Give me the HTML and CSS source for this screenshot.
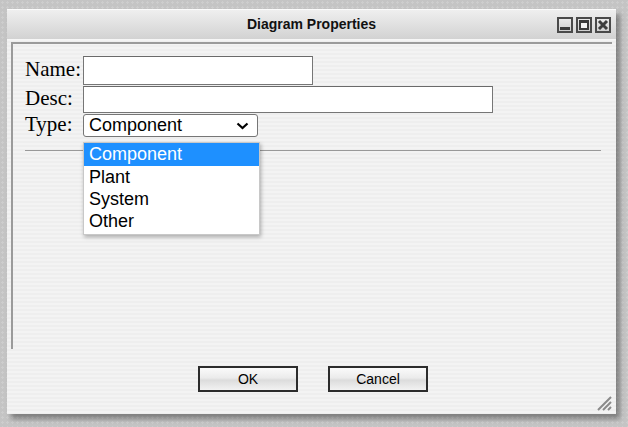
FILE: index.html
```html
<!DOCTYPE html>
<html>
<head>
<meta charset="utf-8">
<link rel="stylesheet" href="styles.css">
</head>
<body>
<div class="window">
  <div class="titlebar">
    <span></span>
    <span class="title">Diagram Properties</span>
    <div class="controls">
      <span class="ctl"><svg width="12" height="12" viewBox="0 0 12 12"><rect x="1" y="8" width="10" height="3" fill="#3c3c3c"/></svg></span>
      <span class="ctl"><svg width="12" height="12" viewBox="0 0 12 12"><rect x="2" y="2" width="8" height="8" fill="#f4f4f4" stroke="#3c3c3c" stroke-width="2"/><rect x="1" y="1" width="10" height="3" fill="#3c3c3c"/></svg></span>
      <span class="ctl"><svg width="12" height="12" viewBox="0 0 12 12"><path d="M2 2 L10 10 M10 2 L2 10" stroke="#3c3c3c" stroke-width="3"/></svg></span>
    </div>
  </div>
  <div class="panel">
    <div class="form">
      <label class="lbl">Name:</label>
      <input class="field name" type="text">
      <label class="lbl">Desc:</label>
      <input class="field desc" type="text">
      <label class="lbl">Type:</label>
      <div class="selwrap">
        <div class="select">
          <span>Component</span>
          <svg width="13" height="8" viewBox="0 0 13 8"><polyline points="1.5,1.5 6.5,6 11.5,1.5" fill="none" stroke="#000" stroke-width="2.2"/></svg>
        </div>
        <div class="dropdown">
          <div class="opt sel">Component</div>
          <div class="opt">Plant</div>
          <div class="opt">System</div>
          <div class="opt">Other</div>
        </div>
      </div>
    </div>
    <div class="rule"></div>
  </div>
  <div class="footer">
    <button class="btn">OK</button>
    <button class="btn">Cancel</button>
  </div>
  <svg class="grip" width="15" height="15" viewBox="0 0 15 15">
    <path d="M1 14 L14 1 M6 14 L14 6 M11 14 L14 11" stroke="#8a8a8a" stroke-width="2"/>
  </svg>
</div>
</body>
</html>
```
FILE: styles.css
```css
html, body {
  margin: 0;
  padding: 0;
}
body {
  width: 628px;
  height: 427px;
  overflow: hidden;
  background-color: #c4c4c4;
  background-image: radial-gradient(circle, #cdcdcd 1px, transparent 1.2px);
  background-size: 5px 5px;
  font-family: "Liberation Sans", Arial, sans-serif;
}
.window {
  position: relative;
  margin: 9px 0 0 7px;
  width: 609px;
  height: 405px;
  box-sizing: border-box;
  background: repeating-linear-gradient(to bottom, #eeeeee 0, #eeeeee 2px, #f3f3f3 2px, #f3f3f3 4px);
  box-shadow: 4px 5px 5px rgba(0, 0, 0, 0.35);
  display: flex;
  flex-direction: column;
}
.titlebar {
  height: 31px;
  box-sizing: border-box;
  border-top: 1px solid #fbfbfb;
  border-bottom: 1px solid #f6f6f6;
  background: linear-gradient(to bottom, #efefef, #d2d2d2);
  display: grid;
  grid-template-columns: 1fr auto 1fr;
  align-items: center;
  padding: 0 5px 0 5px;
}
.title {
  font-weight: bold;
  font-size: 14px;
  color: #111;
  margin-top: -2px;
}
.controls {
  justify-self: end;
  display: flex;
  gap: 3px;
  margin-top: 1px;
}
.ctl {
  width: 16px;
  height: 16px;
  box-sizing: border-box;
  border: 2px solid #4a4a4a;
  background: linear-gradient(to bottom, #eaeaea, #cfcfcf);
  display: flex;
  align-items: center;
  justify-content: center;
}
.ctl svg {
  display: block;
}
.panel {
  margin: 2px 4px 0 4px;
  height: 307px;
  box-sizing: border-box;
  border-top: 2px solid #9a9a9a;
  border-left: 2px solid #9a9a9a;
  padding: 12px 11px 0 12px;
}
.form {
  display: grid;
  grid-template-columns: 58px max-content;
  row-gap: 1px;
  align-items: center;
}
.lbl {
  font-family: "Liberation Serif", "Times New Roman", serif;
  font-size: 21px;
  color: #000;
  line-height: 23px;
  margin-top: -2px;
}
.field {
  box-sizing: border-box;
  margin: 0;
  border: 1px solid #767676;
  border-top-color: #6a6a6a;
  background: #fff;
  padding: 0 3px;
  font-size: 16px;
  outline: none;
}
.name {
  width: 230px;
  height: 29px;
}
.desc {
  width: 410px;
  height: 27px;
}
.selwrap {
  position: relative;
}
.select {
  box-sizing: border-box;
  width: 175px;
  height: 23px;
  border: 1px solid #767676;
  border-radius: 3px;
  background: #fff;
  display: flex;
  align-items: center;
  justify-content: space-between;
  padding: 0 8px 0 5px;
  font-size: 18px;
  color: #000;
}
.select svg {
  display: block;
}
.dropdown {
  position: absolute;
  left: 0;
  top: 28px;
  width: 177px;
  box-sizing: border-box;
  background: #fff;
  border: 1px solid #c8c8c8;
  box-shadow: 1px 2px 4px rgba(0, 0, 0, 0.3);
  padding-bottom: 2px;
}
.opt {
  height: 22px;
  line-height: 22px;
  padding-left: 5px;
  font-size: 18px;
  color: #000;
}
.opt.sel {
  height: 23px;
  background: #1e90ff;
  color: #fff;
}
.rule {
  margin-top: 13px;
  height: 1px;
  background: #999;
}
.footer {
  display: flex;
  justify-content: center;
  gap: 30px;
  padding: 17px 0 0 3px;
}
.btn {
  width: 100px;
  height: 26px;
  box-sizing: border-box;
  margin: 0;
  border: 2px solid #2c2c2c;
  border-radius: 0;
  background: linear-gradient(to bottom, #fafafa 0%, #ebebeb 45%, #dcdcdc 55%, #f2f2f2 100%);
  font-family: "Liberation Sans", Arial, sans-serif;
  font-size: 14px;
  color: #000;
  padding: 0 0 0 0;
  line-height: 22px;
}
.grip {
  position: absolute;
  right: 4px;
  bottom: 3px;
}
```
